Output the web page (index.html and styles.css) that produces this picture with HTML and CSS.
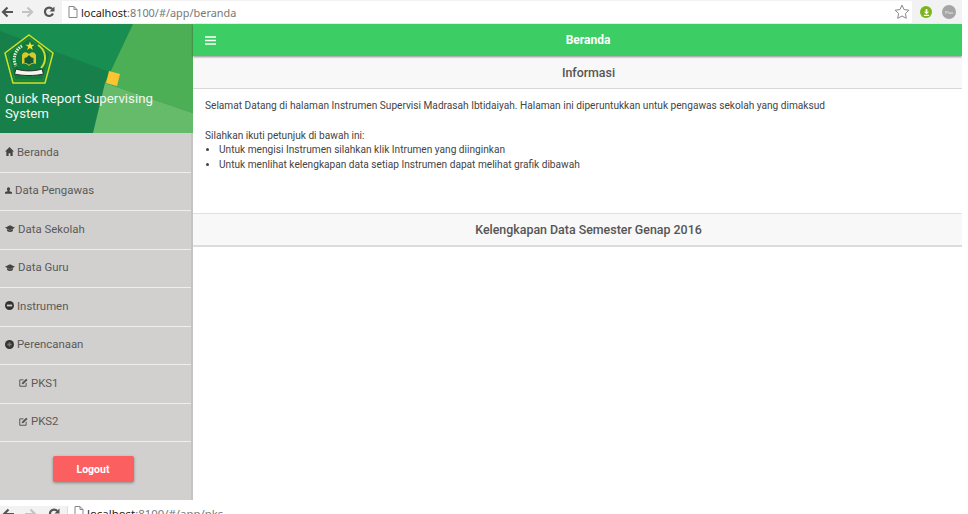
FILE: index.html
```html
<!DOCTYPE html>
<html lang="en">
<head>
    <title>Quick Report Supervising System</title>
    <link rel="stylesheet" href="styles.css">
</head>
<body>
    <!-- Browser toolbar -->
    <div class="browser-bar">
        <div class="browser-nav">
            <svg class="nav-icon" viewBox="0 0 12 12"><path d="M12 6H2.5M6.500 1.500 2 6l4.500 4.500" fill="none" stroke="#555" stroke-width="2.2"/></svg>
            <svg class="nav-icon" viewBox="0 0 12 12"><path d="M0 6h9.500M5.500 1.500 10 6l-4.500 4.500" fill="none" stroke="#c4c4c4" stroke-width="2.2"/></svg>
            <svg class="nav-icon" viewBox="0 0 12 12"><path d="M10 7.500A4.200 4.200 0 1 1 9.300 3" fill="none" stroke="#555" stroke-width="2.2"/><path d="M11.500.4v5H6.500z" fill="#555"/></svg>
        </div>
        <div class="address">
            <svg class="page-icon" viewBox="0 0 10 12"><path d="M1 .5h5l3 3v8H1zM6 .5v3h3" fill="#fff" stroke="#888"/></svg>
            <span class="host">localhost</span><span class="url-path">:8100/#/app/beranda</span>
            <svg class="star-icon" viewBox="0 0 16 16"><path d="m8 1.200 2.100 4.400 4.800.6-3.500 3.300.9 4.800L8 12l-4.300 2.300.9-4.800L1.100 6.200l4.800-.6z" fill="#fff" stroke="#888"/></svg>
        </div>
        <div class="extensions">
            <span class="ext-green">
                <svg viewBox="0 0 8 8"><path d="M3 0h2v3h2L4 6 1 3h2zM1 6.500h6V8H1z" fill="#fff"/></svg>
            </span>
            <span class="ext-gray"><span class="ext-label">Plus</span></span>
        </div>
    </div>

    <div class="app">
        <aside class="sidebar">
            <div class="side-header">
                <svg class="side-bg" viewBox="0 0 193 109" preserveAspectRatio="none">
                    <rect width="193" height="109" fill="#17804a"/>
                    <path d="M0 0h133L110 48 0 7z" fill="#188f50"/>
                    <path d="M133 0h60v89L105 59z" fill="#4caf55"/>
                    <path d="M105 59l88 30v20H93z" fill="#66bb6a"/>
                    <path d="M109 47l11 3-3 12-11-3z" fill="#fbc531"/>
                </svg>
                <svg class="logo" viewBox="0 0 50 50">
                    <path d="M25 1 49 19 41 49H9L1 19z" fill="#14803f" stroke="#cfe02a" stroke-width="1.500"/>
                    <path d="M25 4 46 20 39 46H11L4 20z" fill="#127a3c" stroke="#2fa04a" stroke-width=".6"/>
                    <path d="m26 7.500 1.100 3.200h3.400l-2.700 2 1 3.300-2.800-2-2.800 2 1-3.300-2.700-2h3.400z" fill="#f6e02c"/>
                    <path d="M34 11a15 15 0 0 1 3 23" fill="none" stroke="#c8dc30" stroke-width="2"/>
                    <path d="M18 12a15 15 0 0 0-6 20" fill="none" stroke="#e8eecf" stroke-width="3" stroke-dasharray="1.500 1"/>
                    <path d="M25 20c-3-3-6-2-7 1v9c3-1 5 0 7 2 2-2 4-3 7-2v-9c-1-3-4-4-7-1z" fill="#d8c92a"/>
                    <path d="M25 21c-1.500 2-3 3-4.500 3v5c2 0 3.500.5 4.500 2 1-1.500 2.500-2 4.500-2v-5c-1.500 0-3-1-4.500-3z" fill="#175c33"/>
                    <path d="M12 35c8 2.500 18 2.500 26 0l1.500 5c-9 2-20 2-29 0z" fill="#f4f4ea" stroke="#222" stroke-width=".9"/>
                </svg>
                <div class="app-name">Quick Report Supervising System</div>
            </div>

            <nav class="side-menu">
                <a class="side-item" href="#">
                    <svg class="side-icon" viewBox="1 1 10 10"><path d="M6 1 11 6H9.500V11H7V8H5v3H2.500V6H1z" fill="#444"/></svg>
                    Beranda
                </a>
                <a class="side-item" href="#">
                    <svg class="side-icon person" viewBox="1 1 10 10"><path d="M6 1.500a2.300 2.300 0 0 1 1.500 4V7c1 .5 3.500.7 3.500 2v1.500H1V9c0-1.300 2.500-1.500 3.500-2V5.500A2.300 2.300 0 0 1 6 1.500z" fill="#444"/></svg>
                    Data Pengawas
                </a>
                <a class="side-item" href="#">
                    <svg class="side-icon wide" viewBox="0 1 12 10"><path d="M6 2 12 5 6 8 0 5z" fill="#444"/><path d="M2.500 6.500V9c2 1.500 5 1.500 7 0V6.500L6 8.500z" fill="#444"/></svg>
                    Data Sekolah
                </a>
                <a class="side-item" href="#">
                    <svg class="side-icon wide" viewBox="0 1 12 10"><path d="M6 2 12 5 6 8 0 5z" fill="#444"/><path d="M2.500 6.500V9c2 1.500 5 1.500 7 0V6.500L6 8.500z" fill="#444"/></svg>
                    Data Guru
                </a>
                <a class="side-item" href="#">
                    <svg class="side-icon" viewBox="0 0 12 12"><circle cx="6" cy="6" r="6" fill="#333"/><path d="M2.500 4.800h7v2.400h-7z" fill="#d1d0ce"/></svg>
                    Instrumen
                </a>
                <a class="side-item" href="#">
                    <svg class="side-icon" viewBox="0 0 12 12"><circle cx="6" cy="6" r="6" fill="#333"/><path d="M5 3h2v2h2v2H7v2H5V7H3V5h2z" fill="#777"/></svg>
                    Perencanaan
                </a>
                <a class="side-item sub-item" href="#">
                    <svg class="side-icon" viewBox="0 0 12 12"><path d="M9.500 6.500V11H1V2.500H6" fill="none" stroke="#555" stroke-width="1.300"/><path d="M4 6.200 9.500 1 11.500 2.800 5.900 8 3.700 8.300z" fill="#555"/></svg>
                    PKS1
                </a>
                <a class="side-item sub-item" href="#">
                    <svg class="side-icon" viewBox="0 0 12 12"><path d="M9.500 6.500V11H1V2.500H6" fill="none" stroke="#555" stroke-width="1.300"/><path d="M4 6.200 9.500 1 11.500 2.800 5.900 8 3.700 8.300z" fill="#555"/></svg>
                    PKS2
                </a>
            </nav>

            <div class="logout-wrap">
                <button class="logout">Logout</button>
            </div>
        </aside>

        <main class="content">
            <header class="topbar">
                <svg class="menu-icon" viewBox="0 0 11 9"><path d="M0 1h11M0 4.500h11M0 8h11" stroke="#fff" stroke-width="1.400"/></svg>
                <span class="topbar-title">Beranda</span>
            </header>

            <div class="section-bar info-bar">Informasi</div>

            <section class="info-text">
                <p>Selamat Datang di halaman Instrumen Supervisi Madrasah Ibtidaiyah. Halaman ini diperuntukkan untuk pengawas sekolah yang dimaksud</p>
                <p class="steps-title">Silahkan ikuti petunjuk di bawah ini:</p>
                <ul>
                    <li>Untuk mengisi Instrumen silahkan klik Intrumen yang diinginkan</li>
                    <li>Untuk menlihat kelengkapan data setiap Instrumen dapat melihat grafik dibawah</li>
                </ul>
            </section>

            <div class="section-bar data-bar">Kelengkapan Data Semester Genap 2016</div>
        </main>
    </div>

    <!-- Second browser window, cut off by the edge of the screenshot -->
    <div class="browser-bar next-window">
        <div class="browser-nav">
            <svg class="nav-icon" viewBox="0 0 12 12"><path d="M12 6H2.500M6.500 1.500 2 6l4.500 4.500" fill="none" stroke="#555" stroke-width="2.2"/></svg>
            <svg class="nav-icon" viewBox="0 0 12 12"><path d="M0 6h9.500M5.500 1.500 10 6l-4.500 4.500" fill="none" stroke="#c4c4c4" stroke-width="2.2"/></svg>
            <svg class="nav-icon" viewBox="0 0 12 12"><path d="M10 7.500A4.200 4.200 0 1 1 9.300 3" fill="none" stroke="#555" stroke-width="2.2"/><path d="M11.500.4v5H6.500z" fill="#555"/></svg>
        </div>
        <div class="address">
            <svg class="page-icon" viewBox="0 0 10 12"><path d="M1 .5h5l3 3v8H1zM6 .5v3h3" fill="#fff" stroke="#888"/></svg>
            <span class="host">localhost</span><span class="url-path">:8100/#/app/pks</span>
        </div>
    </div>
</body>
</html>
```

FILE: styles.css
```css
html, body {
    height: 514px;
    overflow: hidden;
}

body {
    font-family: 'Roboto', sans-serif;
    width: 962px;
    margin: 0;
    background-color: #ffffff;
    color: #444;
}

/* Browser toolbar */
.browser-bar {
    display: flex;
    align-items: center;
    height: 24px;
    background-color: #f2f2f2;
}

.browser-nav {
    display: flex;
    align-items: center;
    gap: 9px;
    width: 62px;
    padding-left: 1px;
    box-sizing: border-box;
}

.nav-icon {
    width: 12px;
    height: 12px;
}

.address {
    flex: 1;
    display: flex;
    align-items: center;
    height: 22px;
    background-color: #fff;
    font-family: 'Noto Sans', sans-serif;
    font-size: 10.9px;
    padding-left: 6px;
}

.page-icon {
    width: 10px;
    height: 12px;
    margin-right: 3px;
}

.host {
    color: #222;
}

.url-path {
    color: #777;
}

.star-icon {
    width: 16px;
    height: 16px;
    margin-left: auto;
    margin-right: 2px;
}

.extensions {
    display: flex;
    align-items: center;
    gap: 10px;
    width: 50px;
    padding-left: 8px;
    box-sizing: border-box;
}

.ext-green {
    display: flex;
    align-items: center;
    justify-content: center;
    width: 12px;
    height: 12px;
    border-radius: 50%;
    background-color: #7ab51d;
}

.ext-green svg {
    width: 7px;
    height: 7px;
}

.ext-gray {
    display: flex;
    align-items: center;
    justify-content: center;
    width: 14px;
    height: 14px;
    border-radius: 50%;
    background-color: #a5a5a5;
}

.ext-label {
    color: #ddd;
    font-size: 4px;
    font-weight: 700;
}

.next-window {
    margin-top: 6px;
    align-items: flex-start;
}

.next-window .browser-nav {
    gap: 11px;
    width: 67px;
    padding: 2px 0 0 2px;
}

.next-window .address {
    height: 24px;
    padding-left: 6px;
    border-left: 1px solid #ddd;
    font-size: 11.4px;
    align-items: flex-start;
}

/* App layout */
.app {
    display: flex;
    height: 476px;
}

.sidebar {
    display: flex;
    flex-direction: column;
    width: 193px;
    flex: none;
    box-sizing: border-box;
    background-color: #d1d0ce;
    border-right: 2px solid #c4c4c4;
}

.side-header {
    position: relative;
    height: 109px;
    margin-right: -2px;
    flex: none;
}

.side-bg {
    position: absolute;
    top: 0;
    left: 0;
    width: 100%;
    height: 100%;
}

.logo {
    position: absolute;
    top: 10px;
    left: 4px;
    width: 50px;
    height: 50px;
}

.app-name {
    position: absolute;
    left: 5px;
    top: 67px;
    width: 165px;
    color: #f1f8f1;
    font-size: 13.25px;
    line-height: 15px;
}

.side-menu {
    display: flex;
    flex-direction: column;
    padding-top: 1px;
}

.side-item {
    display: flex;
    align-items: center;
    gap: 3px;
    height: 38.5px;
    box-sizing: border-box;
    padding-left: 5px;
    padding-bottom: 2px;
    border-bottom: 1px solid #eeeeec;
    color: #5a5a5a;
    font-size: 11.4px;
    text-decoration: none;
}

.sub-item {
    padding-left: 19px;
}

.side-icon {
    width: 9px;
    height: 9px;
    flex: none;
}

.side-icon.person {
    width: 7px;
}

.side-icon.wide {
    width: 10px;
}

.logout-wrap {
    display: flex;
    justify-content: center;
    padding-top: 14px;
    padding-right: 5px;
}

.logout {
    width: 81px;
    height: 26px;
    border: none;
    border-radius: 2px;
    background-color: #fb5f5f;
    color: #fff;
    font-family: inherit;
    font-size: 10.5px;
    font-weight: 700;
    box-shadow: 0 1px 3px rgba(0, 0, 0, 0.35);
}

/* Main column */
.content {
    flex: 1;
    min-width: 0;
}

.topbar {
    display: flex;
    align-items: center;
    height: 32px;
    padding-left: 12px;
    background-color: #3dcd65;
    box-shadow: 0 1px 2px rgba(0, 0, 0, 0.45);
    position: relative;
}

.menu-icon {
    width: 11px;
    height: 9px;
    flex: none;
}

.topbar-title {
    flex: 1;
    text-align: center;
    padding-right: 2px;
    color: #fff;
    font-size: 12px;
    font-weight: 700;
}

.section-bar {
    display: flex;
    align-items: center;
    justify-content: center;
    box-sizing: border-box;
    padding-left: 22px;
    background-color: #f8f8f8;
    border-bottom: 1px solid #d8d8d8;
    color: #555;
    font-size: 12.4px;
    font-weight: 500;
}

.info-bar {
    height: 32px;
    margin-top: 1px;
}

.data-bar {
    height: 34px;
    border-top: 1px solid #e0e0e0;
    border-bottom: 2px solid #dcdcdc;
}

.info-text {
    height: 124px;
    box-sizing: border-box;
    padding: 10px 12px 0;
    color: #444;
    font-size: 10.15px;
    line-height: 14.5px;
}

.info-text p {
    margin: 0;
}

.steps-title {
    padding-top: 15px;
}

.info-text ul {
    margin: 0;
    padding-left: 14px;
}
```
